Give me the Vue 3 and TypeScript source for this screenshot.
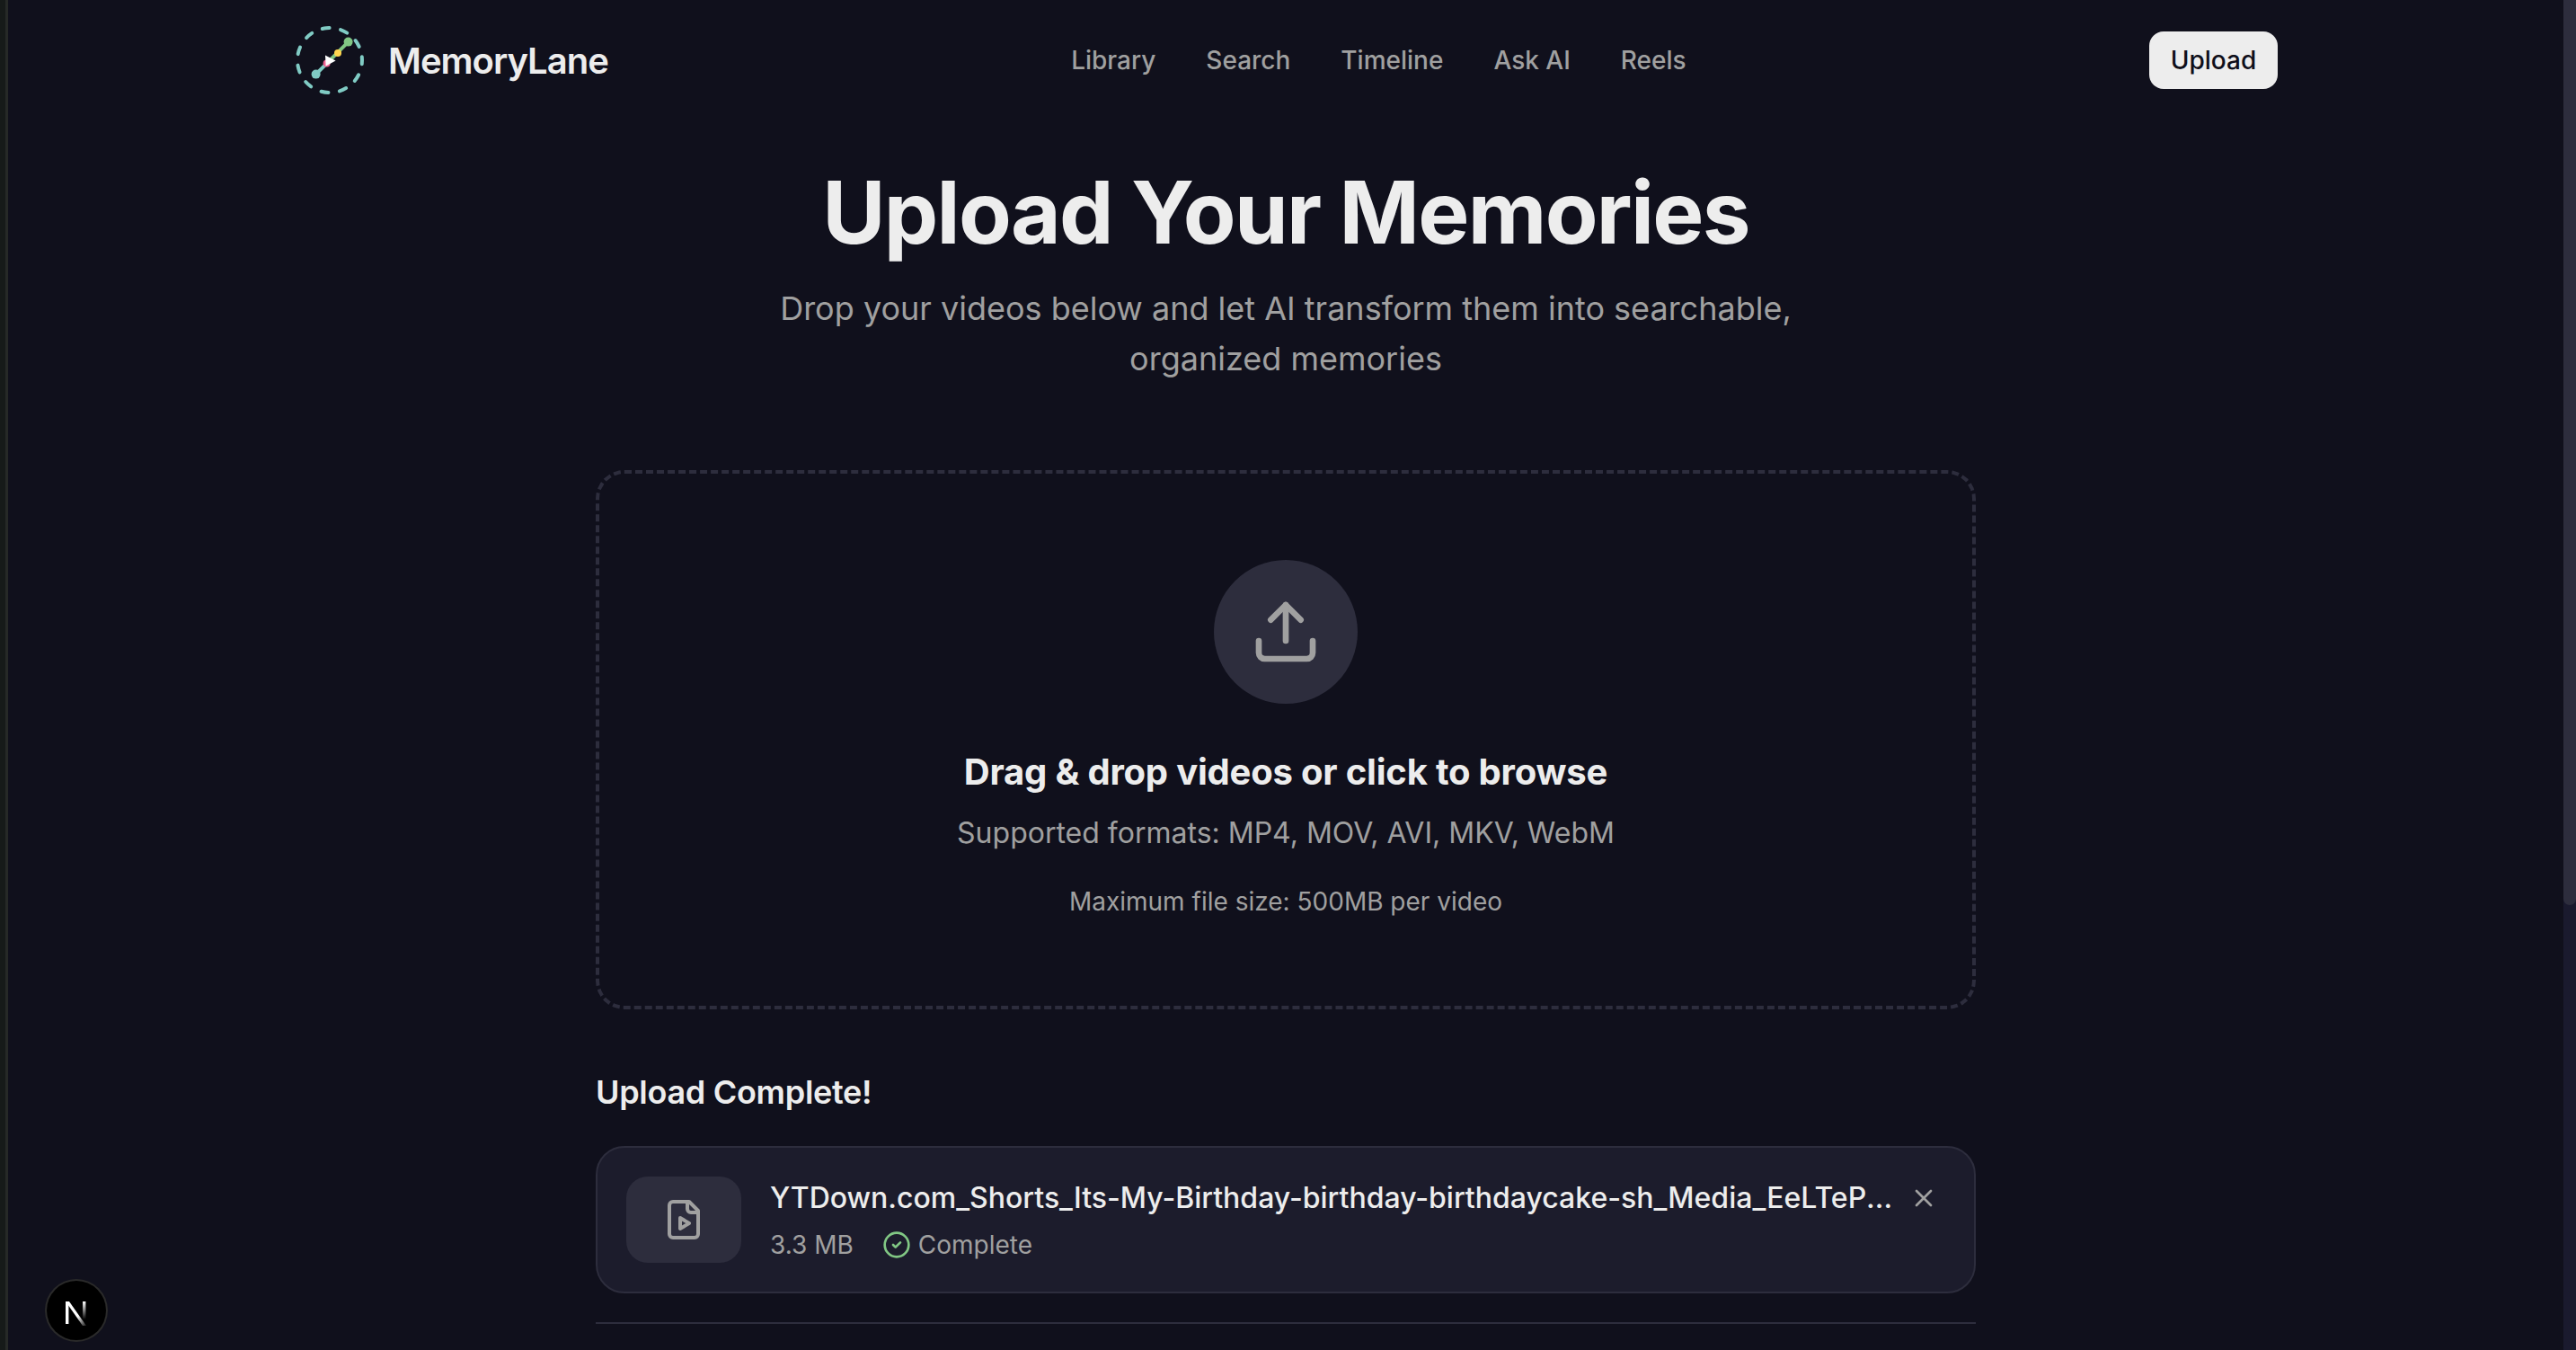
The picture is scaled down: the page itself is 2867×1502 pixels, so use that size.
<script setup lang="ts">
const navLinks = ['Library', 'Search', 'Timeline', 'Ask AI', 'Reels']
</script>

<template>
  <div class="shell">
    <div class="edge"></div>

    <div class="page">
      <header class="topbar">
        <div class="brand">
          <svg class="brand-mark" viewBox="0 0 40 40" fill="none" stroke-linecap="round">
            <circle cx="20" cy="20" r="18" stroke="#80cbc4" stroke-width="2" stroke-dasharray="4 6.3" transform="rotate(-6 20 20)" />
            <path d="M12.3 27.8 18.3 21.8" stroke="#80cbc4" stroke-width="2" />
            <path d="M18.3 21.8 30.3 9.8" stroke="#81c784" stroke-width="2" />
            <circle cx="12.3" cy="27.8" r="2.5" fill="#80cbc4" />
            <circle cx="30.3" cy="9.8" r="2.5" fill="#81c784" />
            <circle cx="24.5" cy="16" r="2" fill="#ffd54f" />
            <circle cx="18.3" cy="21.8" r="2" fill="#f06292" />
            <path d="M17.5 17.3 23.3 20.2 17.8 23.2Z" fill="#fff" />
          </svg>
          <span class="brand-name">MemoryLane</span>
        </div>
        <nav class="nav">
          <a v-for="link in navLinks" :key="link" class="nav-link">{{ link }}</a>
        </nav>
        <button class="upload-btn">Upload</button>
      </header>

      <main class="main">
        <section class="hero">
          <h1>Upload Your Memories</h1>
          <p>Drop your videos below and let AI transform them into searchable, organized memories</p>
        </section>

        <section class="dropzone">
          <div class="drop-icon">
            <svg viewBox="0 0 24 24" fill="none" stroke="currentColor" stroke-width="2" stroke-linecap="round" stroke-linejoin="round">
              <path d="M21 15v4a2 2 0 0 1-2 2H5a2 2 0 0 1-2-2v-4" />
              <path d="M17 8 12 3 7 8" />
              <path d="M12 3v12" />
            </svg>
          </div>
          <h2>Drag &amp; drop videos or click to browse</h2>
          <p class="formats">Supported formats: MP4, MOV, AVI, MKV, WebM</p>
          <p class="limit">Maximum file size: 500MB per video</p>
        </section>

        <section class="results">
          <h3>Upload Complete!</h3>
          <div class="file-card">
            <div class="file-thumb">
              <svg viewBox="0 0 24 24" fill="none" stroke="currentColor" stroke-width="2" stroke-linecap="round" stroke-linejoin="round">
                <path d="M15 2H6a2 2 0 0 0-2 2v16a2 2 0 0 0 2 2h12a2 2 0 0 0 2-2V7Z" />
                <path d="M14 2v4a2 2 0 0 0 2 2h4" />
                <path d="m10 11 5 3-5 3v-6Z" />
              </svg>
            </div>
            <div class="file-body">
              <div class="file-name">YTDown.com_Shorts_Its-My-Birthday-birthday-birthdaycake-sh_Media_EeLTePq0xYk_007_720p.mp4</div>
              <div class="file-meta">
                <span>3.3 MB</span>
                <span class="status">
                  <svg viewBox="0 0 24 24" fill="none" stroke="#81c784" stroke-width="2" stroke-linecap="round" stroke-linejoin="round">
                    <circle cx="12" cy="12" r="10" />
                    <path d="m9 12 2 2 4-4" />
                  </svg>
                  Complete
                </span>
              </div>
            </div>
            <button class="remove-btn" aria-label="Remove">
              <svg viewBox="0 0 24 24" fill="none" stroke="currentColor" stroke-width="2" stroke-linecap="round" stroke-linejoin="round">
                <path d="M18 6 6 18" />
                <path d="m6 6 12 12" />
              </svg>
            </button>
          </div>
          <div class="divider"></div>
        </section>
      </main>

      <div class="dev-badge">
        <svg viewBox="0 0 66 66" fill="none">
          <defs>
            <linearGradient id="nFade" x1="0" y1="0" x2="0" y2="1">
              <stop offset="0" stop-color="#fff" />
              <stop offset="1" stop-color="#fff" stop-opacity="0" />
            </linearGradient>
            <linearGradient id="nDiag" x1="0" y1="0" x2="1" y2="1">
              <stop offset="0.6" stop-color="#fff" />
              <stop offset="1" stop-color="#fff" stop-opacity="0.1" />
            </linearGradient>
          </defs>
          <path d="M21 23h3.4v25H21z" fill="#fff" />
          <path d="M21 23h4l19 27h-4z" fill="url(#nDiag)" />
          <rect x="40" y="23" width="3.4" height="20" fill="url(#nFade)" />
        </svg>
      </div>
    </div>

    <div class="scrollbar">
      <div class="scrollbar-thumb"></div>
    </div>
  </div>
</template>

<style>
html,
body {
  margin: 0;
  background: #10101c;
}
</style>

<style scoped>
.shell {
  display: flex;
  height: 1502px;
  overflow: hidden;
  background: #10101c;
  color: #ededed;
  font-family: Inter, "Liberation Sans", sans-serif;
}

.edge {
  flex: none;
  width: 6px;
  background: #161a19;
  border-right: 3px solid #262927;
}

.page {
  position: relative;
  flex: 1;
  min-width: 0;
}

.scrollbar {
  flex: none;
  width: 14px;
  background: #1a1a2e;
}

.scrollbar-thumb {
  height: 1007px;
  background: #2d2d3d;
  border-radius: 0 0 7px 7px;
}

.topbar {
  display: flex;
  align-items: center;
  justify-content: space-between;
  height: 134px;
  padding: 0 318px 0 318px;
}

.brand {
  display: flex;
  align-items: center;
  gap: 25px;
}

.brand-mark {
  width: 80px;
  height: 80px;
}

.brand-name {
  font-size: 40px;
  font-weight: 600;
  letter-spacing: -1px;
  color: #ededed;
}

.nav {
  display: flex;
  gap: 56px;
}

.nav-link {
  font-size: 28px;
  font-weight: 500;
  line-height: 40px;
  color: #a0a0a0;
}

.upload-btn {
  width: 143px;
  height: 64px;
  border: none;
  border-radius: 16px;
  background: #ededed;
  color: #0f0f1a;
  font: 500 28px Inter, "Liberation Sans", sans-serif;
}

.main {
  width: 1536px;
  margin: 0 auto;
}

.hero {
  margin-top: 54px;
  text-align: center;
}

.hero h1 {
  margin: 0;
  font-size: 96px;
  line-height: 96px;
  font-weight: 700;
  letter-spacing: -1.7px;
  color: #ededed;
}

.hero p {
  max-width: 1280px;
  margin: 31px auto 0;
  font-size: 36px;
  line-height: 56px;
  color: #a0a0a0;
}

.dropzone {
  display: flex;
  flex-direction: column;
  align-items: center;
  margin-top: 96px;
  padding: 96px 0;
  border: 4px dashed #2d2d3d;
  border-radius: 32px;
}

.drop-icon {
  display: flex;
  align-items: center;
  justify-content: center;
  width: 160px;
  height: 160px;
  border-radius: 50%;
  background: #2d2d3d;
  color: #a0a0a0;
}

.drop-icon svg {
  width: 80px;
  height: 80px;
}

.dropzone h2 {
  margin: 48px 0 0;
  font-size: 40px;
  line-height: 56px;
  font-weight: 700;
  letter-spacing: -0.2px;
  color: #ededed;
}

.formats {
  margin: 16px 0 0;
  font-size: 32px;
  line-height: 48px;
  color: #a0a0a0;
}

.limit {
  margin: 32px 0 0;
  font-size: 28px;
  line-height: 40px;
  color: #a0a0a0;
}

.results {
  margin-top: 64px;
}

.results h3 {
  margin: 0;
  font-size: 36px;
  line-height: 56px;
  font-weight: 600;
  letter-spacing: -0.3px;
  color: #ededed;
}

.file-card {
  display: flex;
  align-items: center;
  gap: 32px;
  margin-top: 32px;
  padding: 32px;
  border: 2px solid #2d2d3d;
  border-radius: 32px;
  background: #1c1c2c;
}

.file-thumb {
  display: flex;
  flex: none;
  align-items: center;
  justify-content: center;
  width: 128px;
  height: 96px;
  border-radius: 24px;
  background: #2d2d3d;
  color: #a0a0a0;
}

.file-thumb svg {
  width: 48px;
  height: 48px;
}

.file-body {
  flex: 1;
  min-width: 0;
}

.file-name {
  overflow: hidden;
  font-size: 32px;
  line-height: 48px;
  font-weight: 500;
  white-space: nowrap;
  text-overflow: ellipsis;
  color: #ededed;
}

.file-meta {
  display: flex;
  align-items: center;
  gap: 32px;
  margin-top: 8px;
  font-size: 28px;
  line-height: 40px;
  color: #a0a0a0;
}

.status {
  display: flex;
  align-items: center;
  gap: 8px;
}

.status svg {
  width: 32px;
  height: 32px;
}

.remove-btn {
  align-self: flex-start;
  flex: none;
  width: 48px;
  height: 48px;
  margin-left: -24px;
  padding: 8px;
  border: none;
  background: none;
  color: #a0a0a0;
}

.remove-btn svg {
  display: block;
  width: 32px;
  height: 32px;
}

.divider {
  height: 2px;
  margin-top: 32px;
  background: #2d2d3d;
}

.dev-badge {
  position: absolute;
  left: 43px;
  top: 1425px;
  width: 66px;
  height: 66px;
  border-radius: 50%;
  background: #000;
  box-shadow: 0 0 0 2px #2a2a2a;
}

.dev-badge svg {
  display: block;
  width: 66px;
  height: 66px;
}
</style>
